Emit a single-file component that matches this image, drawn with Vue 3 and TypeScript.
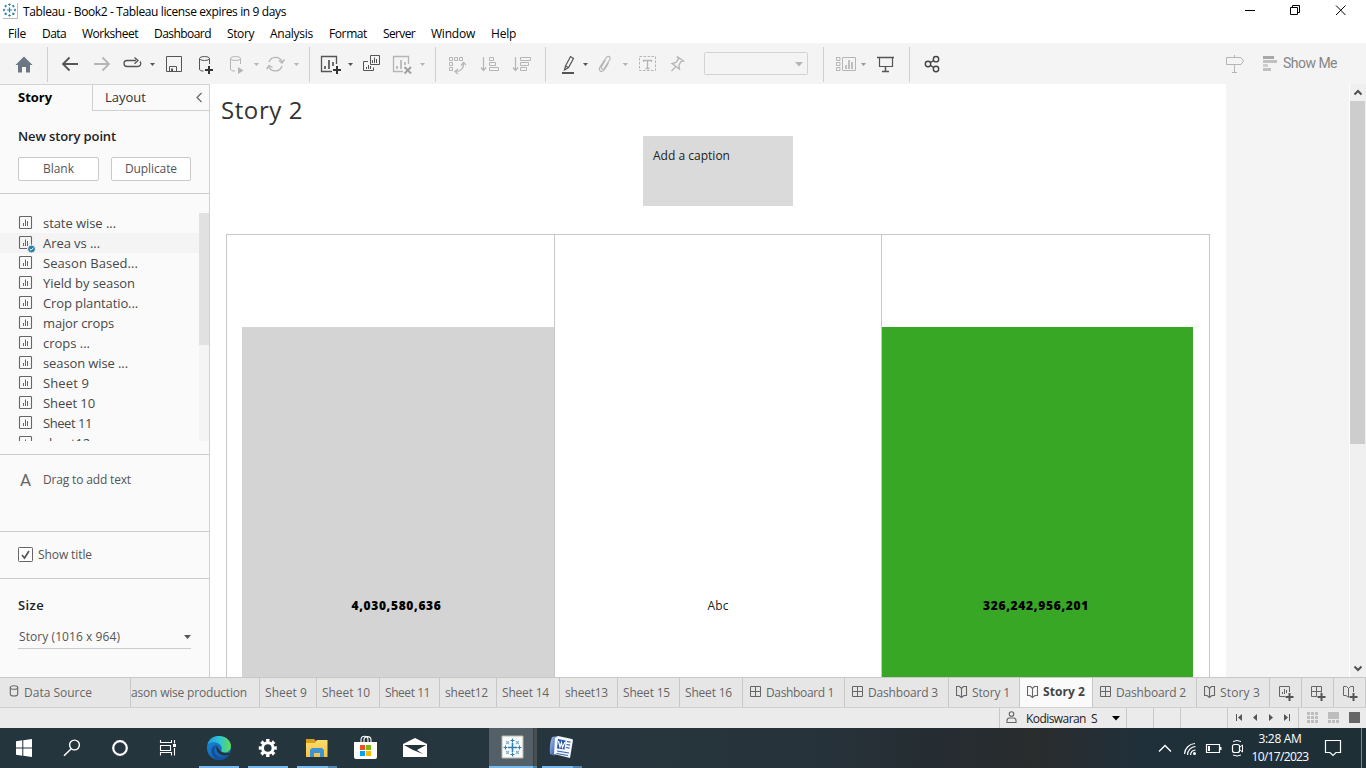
<script setup lang="ts">
import type { Directive } from 'vue'

interface Tab {
  label: string
  width: number
  fit: number
  kind?: 'dash' | 'story'
  active?: boolean
}

// Spreads the letters of a label so that it fills the given width in pixels.
const vFit: Directive<HTMLElement, number> = {
  mounted(el, binding) {
    const count = (el.textContent ?? '').length
    const natural = el.getBoundingClientRect().width
    if (count > 0) el.style.letterSpacing = `${(binding.value - natural) / count}px`
  },
}

const menus: [string, number][] = [
  ['File', 18], ['Data', 24], ['Worksheet', 56], ['Dashboard', 57], ['Story', 27],
  ['Analysis', 43], ['Format', 38], ['Server', 32], ['Window', 44], ['Help', 25],
]

const sheets: [string, number][] = [
  ['state wise ...', 73], ['Area vs ...', 57], ['Season Based...', 95], ['Yield by season', 92],
  ['Crop plantatio...', 95], ['major crops', 71], ['crops ...', 47], ['season wise ...', 85],
  ['Sheet 9', 46], ['Sheet 10', 52], ['Sheet 11', 49], ['sheet12', 47],
]

const tabs: Tab[] = [
  { label: 'Sheet 9', width: 57, fit: 42 },
  { label: 'Sheet 10', width: 63, fit: 48 },
  { label: 'Sheet 11', width: 60, fit: 45 },
  { label: 'sheet12', width: 57, fit: 43 },
  { label: 'Sheet 14', width: 63, fit: 47 },
  { label: 'sheet13', width: 58, fit: 43 },
  { label: 'Sheet 15', width: 62, fit: 47 },
  { label: 'Sheet 16', width: 63, fit: 47 },
  { label: 'Dashboard 1', width: 102, fit: 68, kind: 'dash' },
  { label: 'Dashboard 3', width: 104, fit: 70, kind: 'dash' },
  { label: 'Story 1', width: 71, fit: 38, kind: 'story' },
  { label: 'Story 2', width: 73, fit: 42, kind: 'story', active: true },
  { label: 'Dashboard 2', width: 104, fit: 70, kind: 'dash' },
  { label: 'Story 3', width: 73, fit: 40, kind: 'story' },
]

const rays = [0, 45, 90, 135, 180, 225, 270, 315]
const teeth = [0, 45, 90, 135, 180, 225, 270, 315]
</script>

<template>
  <div class="app">
    <header class="titlebar">
      <svg class="logo" width="15" height="16" viewBox="0 0 15 16">
        <path d="M14.5 0V15.500H0" fill="none" stroke="#b9b9b9" />
        <g transform="translate(6.500 7)" stroke="#2f7fa8" stroke-width="1.200">
          <path d="M-2.500 0H2.500M0-2.500V2.500" />
          <path v-for="r in rays" :key="r" :transform="`rotate(${r})`" d="M5.500-1.300V1.300M4.200 0H6.500" />
        </g>
      </svg>
      <span v-fit="263" class="title">Tableau - Book2 - Tableau license expires in 9 days</span>
      <svg class="winbtns" width="126" height="22" viewBox="1240 0 126 22" fill="none" stroke="#000">
        <path d="M1245 10.500H1255" />
        <path d="M1290.500 7.500H1297.500V14.500H1290.500ZM1292.500 7V5.500H1299.500V12.500H1298" />
        <path d="M1336 5.500L1345.500 15M1345.500 5.500L1336 15" />
      </svg>
    </header>
    <nav class="menubar">
      <span v-for="[m, w] in menus" :key="m" v-fit="w">{{ m }}</span>
    </nav>

    <div class="toolbar">
      <svg class="grp" width="48" height="41" viewBox="0 43 48 41">
        <path d="M24 56.500L32.500 65H30V72.500H26V67H22V72.500H18V65H15.500L20 60.500Z" fill="#6c7784" />
        <path class="sep" d="M47.500 47V82" />
      </svg>
      <svg class="grp" width="262" height="41" viewBox="48 43 262 41">
        <g class="dark">
          <path d="M78 64H63M69.500 57.500L63 64L69.500 70.500" stroke-width="1.800" />
          <path d="M133 66.500H137.500A3 3 0 0 0 140 61.500M136 60.500H127A3 3 0 0 0 127 66.500H134M134.500 57.500L138 60.500L134.500 63.800" stroke-width="1.300" />
          <path d="M166.500 56.500H181.500V71.500H166.500ZM169.500 71.500V66.500H176.500V71.500" />
          <path d="M171 68.500H173V71.500H171Z" fill="#555" stroke="none" />
          <ellipse cx="204.500" cy="58.500" rx="5" ry="2" />
          <path d="M199.500 58.500V69C199.500 70.500 201 71 203.500 71M209.500 58.500V64" />
          <path d="M205 70H213M209 66V74" stroke="#333" stroke-width="2" />
          <path class="caret" d="M150 63H155L152.500 66Z" />
        </g>
        <g class="pale">
          <path d="M94 64H109M102.500 57.500L109 64L102.500 70.500" stroke-width="1.800" />
          <ellipse cx="235.500" cy="58.500" rx="5" ry="2" />
          <path d="M230.500 58.500V69C230.500 70.500 232 71 235 71M240.500 58.500V64" />
          <path d="M238 67L243.500 70.500L238 74Z" fill="#b5b5b5" stroke="none" />
          <path d="M269 62A7 7 0 0 1 282 61.500M282 66A7 7 0 0 1 269 67M284.500 59.500L282 63L279 60.500M266.500 69L269 65.500L272.500 67.500" stroke-width="1.300" />
          <path class="caret" d="M254 63H259L256.500 66ZM294 63H299L296.500 66Z" />
        </g>
        <path class="sep" d="M309.500 47V82" />
      </svg>
      <svg class="grp" width="126" height="41" viewBox="310 43 126 41">
        <g class="dark">
          <path d="M336.500 64V56.500H321.500V71.500H332" stroke-width="1.300" />
          <path d="M325 69V66M329 69V60M333 66V62" stroke-width="1.700" />
          <path d="M333 70H341M337 66V74" stroke="#333" stroke-width="2" />
          <path class="caret" d="M348 63H353L350.500 66Z" />
          <path d="M370.500 55.500H379.500V64.500H370.500ZM368 61.500H363.500V70.500H373.500V67.500" />
          <path d="M372.500 63V60M374.500 63V57.500M376.500 63V59M366.500 69V67M368.500 69V65M370.500 69V66" />
        </g>
        <g class="pale">
          <path d="M408.500 64V56.500H393.500V71.500H403" stroke-width="1.300" />
          <path d="M397 69V66M401 69V60M405 65V62" stroke-width="1.700" />
          <path d="M404.500 67L411 73.500M411 67L404.500 73.500" stroke="#a0a0a0" stroke-width="2" />
          <path class="caret" d="M420 63H425L422.500 66Z" />
        </g>
        <path class="sep" d="M435.500 47V82" />
      </svg>
      <svg class="grp" width="110" height="41" viewBox="436 43 110 41">
        <g class="pale">
          <path d="M449.500 57.500H452.500V60.500H449.500ZM454.500 57.500H457.500V60.500H454.500ZM459.500 57.500H462.500V60.500H459.500ZM449.500 62.500H452.500V65.500H449.500ZM449.500 67.500H452.500V70.500H449.500Z" />
          <path d="M463.500 63C464 68 461 71.500 455.500 71.500M461 65.500L463.500 62.500L466 65M458 69L455 71.500L458 74" stroke-width="1.200" />
          <path d="M483.500 57V70M481 67.500L483.500 70.500L486 67.500M515.500 57V70M513 67.500L515.500 70.500L518 67.500" stroke-width="1.200" />
          <path d="M489.500 57.500H493.500V60.500H489.500ZM489.500 62.500H495.500V65.500H489.500ZM489.500 67.500H498.500V70.500H489.500ZM520.500 57.500H530.500V60.500H520.500ZM520.500 62.500H528.500V65.500H520.500ZM520.500 67.500H526.500V70.500H520.500Z" />
        </g>
        <path class="sep" d="M545.500 47V82" />
      </svg>
      <svg class="grp" width="278" height="41" viewBox="546 43 278 41">
        <g class="dark">
          <path d="M565.500 66L570.500 56.500L573.500 58.500L568.500 67.500L564.500 70ZM565.500 66L568.500 67.500" stroke-width="1.200" />
          <path d="M562 73H574" stroke-width="2" />
          <path class="caret" d="M583 63H588L585.500 66Z" />
        </g>
        <g class="pale">
          <path d="M605.500 60L601.500 66.500C600.500 69 603 70 604.500 68L609.500 60C611.500 56.500 608 55 606 58L600 67C597.500 71.500 602.500 72.500 604.500 69.500L608.500 63" stroke-width="1.200" />
          <path class="caret" d="M622.500 63H628L625.500 66ZM795 62H803L799 66.500Z" />
          <path d="M639.500 56.500H655.500V70.500H639.500Z" stroke-dasharray="2.500 1.500" />
          <path d="M643.500 62V60.500H651.500V62M647.500 60.500V68.500M645.500 68.500H649.500" stroke-width="1.300" />
          <path d="M677 56.500L683.500 61L681 61.500L679 65L679.500 69L672 63.500L676 62.500L678.500 59ZM675.500 67L671.500 71" stroke-width="1.300" />
          <rect x="704.500" y="52.500" width="103" height="22" rx="1" stroke="#d2d2d2" />
        </g>
        <path class="sep" d="M823.500 47V82" />
      </svg>
      <svg class="grp" width="86" height="41" viewBox="824 43 86 41">
        <g class="pale">
          <path d="M836.500 57.500H840V60.500H836.500ZM836.500 62.500H840V65.500H836.500ZM836.500 67.500H840V70.500H836.500ZM842.500 57.500H855.500V70.500H842.500Z" />
          <path d="M846 69V65M849 69V60M852 69V62" stroke-width="1.700" />
          <path class="caret caret-mid" d="M861 63H866L863.500 66Z" />
        </g>
        <g class="dark">
          <path d="M877 57.500H894M885.500 67V72M882 71.500H889" stroke-width="1.500" />
          <path d="M879.500 58V66.500H892.500V58" stroke-width="1.200" />
        </g>
        <path class="sep" d="M909.500 47V82" />
      </svg>
      <svg class="grp" width="40" height="41" viewBox="910 43 40 41" fill="none" stroke="#444" stroke-width="1.400">
        <circle cx="928" cy="64" r="2.700" /><circle cx="936" cy="59.200" r="2.700" /><circle cx="936" cy="69" r="2.700" />
        <path d="M930.300 62.600L933.700 60.500M930.300 65.400L933.700 67.500" />
      </svg>
      <svg class="grp showme-icons" width="60" height="41" viewBox="1220 43 60 41">
        <g class="pale"><path d="M1226.500 57.500H1241L1243.500 61L1241 64.500H1226.500ZM1234.500 55V57.500M1234.500 64.500V72.500M1232 72.500H1237" /></g>
        <path d="M1263 56H1274V59H1263Z" fill="#a8a8a8" /><path d="M1263 60H1277V63H1263ZM1263 68H1271V71H1263Z" fill="#c0c0c0" /><path d="M1263 64H1268V67H1263Z" fill="#d0d0d0" />
      </svg>
      <span v-fit="54" class="showme">Show Me</span>
    </div>

    <div class="workspace">
      <aside class="sidebar">
        <div class="panes">
          <div class="pane-on"><b v-fit="34">Story</b></div>
          <div class="pane-off">
            <span v-fit="41">Layout</span>
            <svg width="8" height="12" viewBox="0 0 8 12" fill="none" stroke="#666" stroke-width="1.200"><path d="M6.500 1L2 5.500L6.500 10" /></svg>
          </div>
        </div>
        <section class="newpoint">
          <h3><span v-fit="98">New story point</span></h3>
          <div class="btns">
            <button class="btn"><span v-fit="31">Blank</span></button>
            <button class="btn"><span v-fit="52">Duplicate</span></button>
          </div>
        </section>
        <section class="sheets">
          <ul>
            <li v-for="([s, w], i) in sheets" :key="s" :class="{ used: i === 1 }">
              <svg width="18" height="18" viewBox="0 0 18 18" fill="none" stroke="#666">
                <rect x="1.500" y="1.500" width="12" height="12" rx="0.800" stroke-width="1.100" />
                <path d="M5.500 11V8M7.500 11V4.500M9.500 11V6" />
                <g v-if="i === 1"><circle cx="13.500" cy="14" r="4" fill="#2f7fa5" stroke="#f4f4f4" /><path d="M11.700 14L13 15.300L15.400 12.700" stroke="#fff" /></g>
              </svg>
              <span v-fit="w">{{ s }}</span>
            </li>
          </ul>
          <div class="track"><div class="thumb"></div></div>
        </section>
        <section class="dragtext"><span class="bigA">A</span><span v-fit="88">Drag to add text</span></section>
        <section class="showtitle">
          <svg width="16" height="16" viewBox="0 0 16 16" fill="none" stroke="#666"><rect x="0.500" y="0.500" width="14" height="14" rx="0.800" fill="#fff" /><path d="M4 8L6.500 11L11 4" stroke="#555" stroke-width="1.700" /></svg>
          <span v-fit="54">Show title</span>
        </section>
        <section class="size">
          <h3><span v-fit="26">Size</span></h3>
          <div class="select"><span v-fit="101">Story (1016 x 964)</span><svg width="7" height="4" viewBox="0 0 7 4"><path d="M0 0H7L3.500 4Z" fill="#555" /></svg></div>
        </section>
      </aside>

      <main class="canvas">
        <h1><span v-fit="82">Story 2</span></h1>
        <div class="caption"><span v-fit="77">Add a caption</span></div>
        <div class="viz">
          <div class="cell first"><div class="mark grey"><b v-fit="90">4,030,580,636</b></div></div>
          <div class="cell mid"><div class="mark"><span v-fit="21">Abc</span></div></div>
          <div class="cell last"><div class="mark green"><b v-fit="106">326,242,956,201</b></div></div>
        </div>
      </main>
      <div class="gutter"></div>
      <div class="scroll">
        <svg width="16" height="17" viewBox="0 0 16 17" fill="none" stroke="#505050" stroke-width="2"><path d="M4.500 10.500L8 7L11.500 10.500" /></svg>
        <div class="scroll-thumb"></div>
        <svg class="down" width="16" height="17" viewBox="0 0 16 17" fill="none" stroke="#505050" stroke-width="2"><path d="M4.500 6.500L8 10L11.500 6.500" /></svg>
      </div>
    </div>

    <div class="tabs">
      <div class="tab source">
        <svg width="11" height="14" viewBox="0 0 11 14" fill="none" stroke="#666" stroke-width="1.100"><ellipse cx="5" cy="3.500" rx="3.700" ry="1.800" /><path d="M1.300 3.500V10Q1.300 12 5 12Q8.700 12 8.700 10V3.500" /></svg>
        <span v-fit="68">Data Source</span>
      </div>
      <div class="tab clipped"><span v-fit="116">ason wise production</span></div>
      <div v-for="t in tabs" :key="t.label" class="tab" :class="{ active: t.active, plain: !t.kind }" :style="{ width: t.width + 'px' }">
        <svg v-if="t.kind === 'dash'" class="ticon" width="12" height="13" viewBox="0 0 12 13" fill="none" stroke="#666"><path d="M0.500 1.500H10.500V11.500H0.500ZM5.500 1.500V11.500M0.500 6.500H10.500" /></svg>
        <svg v-if="t.kind === 'story'" class="ticon" width="12" height="13" viewBox="0 0 12 13" fill="none" stroke="#666" stroke-width="1.100"><path d="M0.500 1.500H3.500L5.500 3.500L7.500 1.500H10.500V10.500H8L5.500 12.500L3 10.500H0.500ZM5.500 3.500V12.500" /></svg>
        <span v-fit="t.fit">{{ t.label }}</span>
      </div>
      <div class="tab add">
        <svg width="17" height="17" viewBox="0 0 17 17" fill="none" stroke="#666"><path d="M11.500 6V0.500H1.500V10.500H7M4.500 8V6M6.500 8V3M8.500 7V4" /><path d="M7.500 11H15.500M11.500 7V15" stroke="#555" stroke-width="2" /></svg>
      </div>
      <div class="tab add">
        <svg width="17" height="17" viewBox="0 0 17 17" fill="none" stroke="#666"><path d="M11.500 6.500V0.500H1.500V10.500H7M6.500 0.500V10.500M1.500 5.500H11.500" /><path d="M7.500 11H15.500M11.500 7V15" stroke="#555" stroke-width="2" /></svg>
      </div>
      <div class="tab add">
        <svg width="17" height="17" viewBox="0 0 17 17" fill="none" stroke="#666"><path d="M11.500 6V0.500H8.500L6.500 2.500L4.500 0.500H1.500V9.500H4L6.500 11.500M6.500 2.500V11" /><path d="M7.500 11H15.500M11.500 7V15" stroke="#555" stroke-width="2" /></svg>
      </div>
    </div>

    <div class="status">
      <div class="st user">
        <svg width="12" height="14" viewBox="0 0 12 14" fill="none" stroke="#666" stroke-width="1.100"><circle cx="5.500" cy="3" r="2.300" /><path d="M1 11.500V9.500Q1 7 3.500 7H7.500Q10 7 10 9.500V11.500Z" /></svg>
        <span v-fit="71">Kodiswaran&nbsp; S</span>
        <svg width="8" height="5" viewBox="0 0 8 5"><path d="M0 0H8L4 4.500Z" /></svg>
      </div>
      <div class="st blank"></div>
      <div class="st blank"></div>
      <div class="st blank-wide"></div>
      <div class="st pager">
        <svg width="70" height="20" viewBox="1228 708 70 20" fill="#555"><path d="M1236 714H1237V721H1236ZM1242 714V721L1238 717.500ZM1257 714V721L1253 717.500ZM1269 714V721L1273 717.500ZM1284 714V721L1288 717.500ZM1289 714H1290V721H1289Z" /></svg>
      </div>
      <svg width="66" height="20" viewBox="1300 708 66 20"><path d="M1307 712h3v3h-3zm4 0h3v3h-3zm4 0h3v3h-3zm-8 4h3v3h-3zm4 0h3v3h-3zm4 0h3v3h-3zm-8 4h3v3h-3zm4 0h3v3h-3zm4 0h3v3h-3zM1328 712h11v7h-11zm0 8h3v3h-3zm4 0h3v3h-3zm4 0h3v3h-3z" fill="#bdbdbd" /><path d="M1349 712H1360V723H1349Z" fill="#666" /></svg>
    </div>

    <footer class="taskbar">
      <svg class="tasks" width="600" height="40" viewBox="0 728 600 40">
        <defs>
          <linearGradient id="edgeTop" x1="0" y1="0" x2="1" y2="0"><stop offset="0" stop-color="#2297dc" /><stop offset="0.500" stop-color="#2cc3d4" /><stop offset="1" stop-color="#62dc55" /></linearGradient>
          <linearGradient id="edgeLow" x1="0" y1="0" x2="1" y2="1"><stop offset="0" stop-color="#168bdc" /><stop offset="1" stop-color="#12529f" /></linearGradient>
          <linearGradient id="fold" x1="0" y1="0" x2="0" y2="1"><stop offset="0" stop-color="#ffdc70" /><stop offset="1" stop-color="#f4c342" /></linearGradient>
          <linearGradient id="word" x1="0" y1="0" x2="1" y2="1"><stop offset="0" stop-color="#a9c5ef" /><stop offset="1" stop-color="#1c459d" /></linearGradient>
        </defs>
        <path d="M489 728H533V768H489Z" fill="#536067" /><path d="M533 728H534V768H533Z" fill="#36434a" /><path d="M534 728H537V768H534Z" fill="#46514f" />
        <path d="M16 741.200L22.300 740.300V747.500H16ZM23.300 740.200L32 739V747.500H23.300ZM16 748.500H22.300V755.700L16 754.800ZM23.300 748.500H32V757L23.300 755.800Z" fill="#fff" />
        <g fill="none" stroke="#fff"><circle cx="74.500" cy="745" r="4.900" stroke-width="1.400" /><path d="M71 749L64 755.700" stroke-width="1.500" /><circle cx="120" cy="748" r="6.800" stroke-width="2.200" />
          <path d="M160.500 740V742.500H171.500V740M160.500 755.500V752.500H171.500V755.500M160.500 745.500H170.500V750.500H160.500ZM174.500 740V743.500M174.500 748V755.500" stroke-width="1.100" /></g>
        <path d="M173 744H176V747H173Z" fill="#fff" />
        <circle cx="219" cy="748" r="12" fill="url(#edgeLow)" />
        <path d="M207.300 745C209 738 214 736 219 736C227 736 231 742 231 746C231 751 227.500 753 223 752.500C219.500 752 222.500 750 221.500 747C220 742 211 740.500 207.300 745Z" fill="url(#edgeTop)" />
        <path d="M217 745.500C213 748 214 755 219 757C223 758.600 227.500 757 229.300 755C225.500 762 214 761.500 211.500 753C210.500 748 213 745.500 217 745.500Z" fill="#134f9b" />
        <path d="M217 745.500C214.500 750 219 755.500 225 755.500C227.500 755.500 229 754.500 229.300 755C230 753 228 753 225 753C221 752.500 218.500 750 217 745.500Z" fill="#24343b" />
        <g transform="translate(267.800 748)"><circle r="5.300" fill="none" stroke="#fff" stroke-width="3" /><path v-for="t in teeth" :key="t" :transform="`rotate(${t})`" d="M-1.800-9H1.800L1.500-6H-1.500Z" fill="#fff" /></g>
        <path d="M306 739H314L316 741H327V757H306Z" fill="#dba013" /><path d="M306 743H315L317 740H327.500V757H306Z" fill="url(#fold)" /><path d="M310 757V750L312 748H322L324 750V757H320V753H314V757Z" fill="#3d93d5" />
        <path d="M361 742V740C361 735 368 735 368 740V742M364 742V740C364 735.500 371 735.500 371 740V742" fill="none" stroke="#fff" stroke-width="1.100" />
        <path d="M354 742H377V757Q377 759 375 759H356Q354 759 354 757Z" fill="#fff" /><path d="M360 745H365V750H360Z" fill="#f15022" /><path d="M366 745H371V750H366Z" fill="#7eba08" /><path d="M360 751H365V756H360Z" fill="#04a3ef" /><path d="M366 751H371V756H366Z" fill="#ffb804" />
        <path d="M403 744L415 738L427 744V757H403Z" fill="#fff" /><path d="M404 745H426L417 750L423 754L413 750Z" fill="#24343b" />
        <path d="M502 736H523V758H502Z" fill="#fafafa" stroke="#b8b5ae" />
        <g transform="translate(512.500 747.500)" stroke-width="1.200"><path d="M-4.500 0H4.500M0-4.500V4.500" stroke="#2d82b1" stroke-width="1.600" /><path v-for="r in rays" :key="r" :transform="`rotate(${r})`" d="M7-2V2M5 0H9" :stroke="r % 90 ? '#80afc9' : '#2d82b1'" /></g>
        <path d="M552 737L558 736L555 756L550 754Q549 745 552 737Z" fill="url(#word)" /><path d="M555 738L558 736L572 739L573 740L570 758L554 754Z" fill="#f4f8ff" /><path d="M558 739L565.500 740.500L564.500 749.500L557 748.500Z" fill="#2853ad" />
        <path d="M558.500 741L560 747L561.500 742.500L562.500 747.500L565 742" fill="none" stroke="#fff" stroke-width="1.200" /><path d="M567 741.500L570.500 742.200M566.500 744.500L570 745.200M566 747.500L569.500 748.200M557 751L569 753M556.500 753.500L568 755.500" stroke="#3761b5" stroke-width="1.200" />
        <path d="M199 766H239V768H199ZM248 766H288V768H248ZM297 766H328V768H297ZM489 766H533V768H489ZM542 766H573V768H542Z" fill="#76b9ed" /><path d="M328 766H337V768H328ZM533 766H537V768H533ZM573 766H582V768H573Z" fill="#5486ad" />
      </svg>
      <svg class="tray" width="100" height="40" viewBox="1150 728 100 40" fill="none" stroke="#fff">
        <path d="M1159 751.500L1165 745.500L1171 751.500" stroke-width="1.400" />
        <path d="M1184.500 754A11 11 0 0 1 1195 743.500M1187.500 755A8.500 8.500 0 0 1 1195.500 746.500M1190.500 755A5.500 5.500 0 0 1 1195.500 750" stroke-width="1.200" /><circle cx="1194.500" cy="753.500" r="1.500" fill="#fff" stroke="none" />
        <path d="M1206.500 744.500H1219.500V752.500H1206.500Z" stroke-width="1.200" /><path d="M1208 746H1210V751H1208ZM1220 747H1221.500V750H1220Z" fill="#fff" stroke="none" />
        <rect x="1232.500" y="744.500" width="7" height="8" rx="2" stroke-width="1.200" /><path d="M1240 747L1242.500 745V752L1240 750M1233 741.500Q1237 739.500 1241 741.500M1233 755Q1237 757 1241 755" />
      </svg>
      <div class="clock"><span v-fit="43">3:28 AM</span><span v-fit="57">10/17/2023</span></div>
      <svg class="note" width="56" height="40" viewBox="1310 728 56 40" fill="none" stroke="#fff"><path d="M1325.500 740.500H1340.500V752.500H1336L1333 755.500L1330 752.500H1325.500Z" stroke-width="1.200" /><path d="M1361.500 728V768" stroke="#7c878d" /></svg>
    </footer>
  </div>
</template>

<style>
body { margin: 0; overflow: hidden; }
</style>

<style scoped>
.app { width: 1366px; height: 768px; display: flex; flex-direction: column; overflow: hidden; background: #fff; font-family: "Open Sans", "Noto Sans", sans-serif; font-size: 12px; font-weight: 400; color: #333; white-space: nowrap; }
svg { display: block; flex: none; }
span, b { flex: none; }
h1, h3, ul { margin: 0; padding: 0; list-style: none; }
.titlebar { height: 22px; flex: none; display: flex; align-items: flex-start; font-size: 12px; color: #000; }
.logo { margin: 3px 0 0 3px; }
.title { margin-left: 5px; line-height: 23px; }
.winbtns { margin-left: auto; }
.menubar { height: 21px; flex: none; display: flex; gap: 16px; padding-left: 8px; line-height: 23px; color: #000; }
.toolbar { height: 41px; flex: none; display: flex; background: #f4f4f4; }
.dark { fill: none; stroke: #555; }
.pale { fill: none; stroke: #b5b5b5; }
.dark .caret { fill: #555; stroke: none; }
.pale .caret { fill: #b5b5b5; stroke: none; }
.pale .caret-mid { fill: #999; }
.sep { stroke: #d0d0d0; fill: none; }
.showme-icons { margin-left: 270px; }
.showme { margin-left: 3px; font-family: Roboto, sans-serif; font-size: 14px; line-height: 41px; color: #858585; }
.workspace { height: 593px; flex: none; display: flex; overflow: hidden; }
.sidebar { box-sizing: border-box; width: 210px; flex: none; background: #fafafa; border-right: 1px solid #d0d0d0; border-top: 1px solid #d4d4d4; }
.panes { display: flex; height: 26px; }
.pane-on { width: 74px; padding-left: 18px; line-height: 25px; color: #000; }
.pane-on b { font-weight: 700; font-size: 13px; }
.pane-off { box-sizing: border-box; width: 117px; display: flex; align-items: center; justify-content: space-between; padding: 0 6px 0 12px; font-size: 13px; line-height: 25px; border-left: 1px solid #d0d0d0; border-bottom: 1px solid #d0d0d0; }
.newpoint { height: 82px; border-bottom: 1px solid #ccc; }
h3 { font-size: 13px; font-weight: 600; line-height: 18px; padding-left: 18px; color: #222; }
.newpoint h3 { padding-top: 16px; }
.btns { display: flex; gap: 12px; padding: 12px 0 0 18px; }
.btn { box-sizing: border-box; width: 81px; height: 24px; padding: 0 0 2px; border: 1px solid #c9c9c9; border-radius: 2px; background: #fff; font: 400 12px "Open Sans", sans-serif; color: #555; }
.btn + .btn { width: 80px; }
.sheets { box-sizing: border-box; height: 261px; padding-top: 19px; display: flex; border-bottom: 1px solid #ccc; }
.sheets ul { width: 199px; height: 228px; overflow: hidden; font-size: 13px; color: #484848; }
.sheets li { height: 20px; display: flex; align-items: flex-start; padding-left: 18px; line-height: 21px; }
.sheets li svg { margin: 2px 7px 0 0; }
.sheets li.used { background: #f4f4f4; }
.track { width: 10px; height: 228px; background: #f4f4f4; }
.thumb { height: 132px; background: #e1e1e1; }
.dragtext { height: 76px; display: flex; align-items: flex-start; padding-left: 20px; line-height: 50px; color: #555; border-bottom: 1px solid #ccc; }
.bigA { width: 23px; font-family: Roboto, sans-serif; font-size: 17px; color: #666; }
.showtitle { height: 46px; display: flex; align-items: center; gap: 4px; padding-left: 18px; color: #555; border-bottom: 1px solid #ccc; }
.showtitle span { margin-top: -1px; }
.size h3 { padding-top: 17px; }
.select { display: flex; align-items: center; justify-content: space-between; width: 172px; height: 23px; margin: 11px 0 0 18px; padding-left: 1px; border-bottom: 1px solid #ccc; color: #555; }
.canvas { width: 1016px; flex: none; overflow: hidden; }
h1 { font-size: 24px; font-weight: 400; line-height: 28px; padding: 12px 0 12px 11px; color: #333; }
.caption { box-sizing: border-box; width: 150px; height: 70px; margin-left: 433px; padding: 10px; background: #dadada; line-height: 20px; color: #222; }
.viz { box-sizing: border-box; width: 984px; height: 500px; margin: 28px 0 0 16px; display: flex; border: 1px solid #c8c8c8; }
.cell { box-sizing: border-box; padding-top: 92px; border-right: 1px solid #c8c8c8; }
.first { width: 328px; padding-left: 15px; }
.mid { width: 327px; }
.last { width: 327px; padding-right: 16px; border-right: 0; }
.mark { height: 400px; text-align: center; line-height: 20px; padding-top: 269px; color: #222; }
.mark b { font-weight: 800; color: #000; margin-right: 3px; }
.grey { background: #d4d4d4; }
.green { background: #38a726; }
.gutter { width: 123px; background: #f4f4f4; }
.scroll { width: 17px; box-sizing: border-box; border-left: 1px solid #fff; background: #f0f0f0; display: flex; flex-direction: column; }
.scroll-thumb { height: 343px; width: 15px; background: #cdcdcd; }
.down { margin-top: auto; }
.tabs { box-sizing: border-box; height: 31px; flex: none; display: flex; background: #e6e6e6; border-top: 1px solid #c8c8c8; border-bottom: 1px solid #cfcfcf; line-height: 29px; color: #666; }
.tab { box-sizing: border-box; flex: none; display: flex; padding-left: 6px; border-right: 1px solid #c8c8c8; overflow: hidden; }
.plain { padding-left: 5px; }
.ticon { margin: 7px 4px 0 1px; }
.source { width: 131px; padding-left: 9px; }
.source svg { margin: 6px 4px 0 0; }
.clipped { width: 129px; padding-left: 0; }
.active { background: #fafafa; color: #444; font-weight: 700; line-height: 27px; }
.add { width: 32px; padding: 8px 0 0 8px; }
.status { height: 20px; flex: none; display: flex; background: #ebebeb; }
.st { box-sizing: border-box; border-right: 1px solid #c8c8c8; }
.user { width: 128px; margin-left: 999px; display: flex; align-items: center; border-left: 1px solid #c8c8c8; padding-left: 6px; color: #222; }
.user span { margin: 0 15px 0 8px; }
.blank { width: 27px; }
.blank-wide { width: 47px; }
.pager { width: 71px; margin-right: 1px; }
.taskbar { height: 40px; flex: none; display: flex; background: linear-gradient(90deg, #24353d 0, #27363e 45%, #26323a 60%, #252d32 68%, #2a2c2d 76%, #20303a 83%, #1e2f36 100%); }
.tray { margin-left: 550px; }
.clock { width: 60px; display: flex; flex-direction: column; align-items: center; padding-top: 2px; line-height: 18px; color: #fff; }
</style>
